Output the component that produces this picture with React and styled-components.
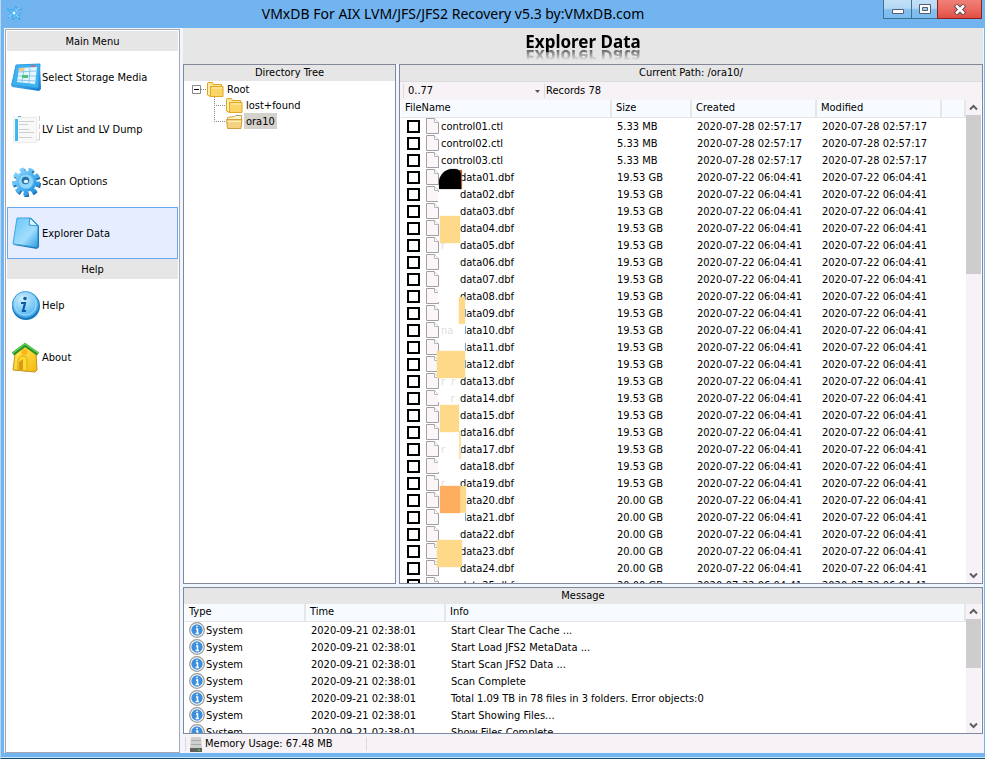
import React, { useState } from 'react';
import styled, { createGlobalStyle } from 'styled-components';


const GlobalStyle = createGlobalStyle`
    * {
        box-sizing: border-box;
    }
    body {
        margin: 0;
        font-family: "DejaVu Sans Condensed", "Noto Sans", sans-serif;
        font-size: 11px;
        line-height: 16px;
        color: #000;
    }
    button, select, input {
        font: inherit;
        color: inherit;
        margin: 0;
    }
    h1, h2, ul {
        margin: 0;
        padding: 0;
        font-size: inherit;
        font-weight: 400;
    }
    svg {
        display: block;
        flex: none;
    }
`

const Window = styled.div`
    display: flex;
    flex-direction: column;
    height: 100vh;
    background: #72b4f0;
    border-left: 1px solid #b5d8f8;
    border-bottom: 1px solid #1f4a6c;
    overflow: hidden;
`

const TitleBar = styled.header`
    display: flex;
    align-items: flex-start;
    flex: none;
    height: 28px;
    padding: 0 3px 0 5px;
`

const TitleIcon = styled.div`
    flex: none;
    padding-top: 5px;
`

const Title = styled.h1`
    flex: 1;
    text-align: center;
    font-family: "Noto Sans", sans-serif;
    font-size: 14px;
    line-height: 28px;
    white-space: nowrap;
`

const WindowButtons = styled.div`
    display: flex;
    justify-content: flex-end;
    width: 99px;
`

const WindowButton = styled.button`
    display: flex;
    align-items: center;
    justify-content: center;
    width: ${p => p.$width}px;
    height: 19px;
    padding: 0;
    border: 1px solid ${p => p.$close ? '#8d1f1c' : '#3f7193'};
    border-top: 0;
    border-right-width: ${p => p.$last ? '1px' : '0'};
    background: ${p => p.$close
        ? 'linear-gradient(#f08078 0%, #ec6a60 50%, #e04e43 100%)'
        : 'linear-gradient(#c2e0f7 0%, #b5d9f5 45%, #84c0ee 55%, #7cbcf0 100%)'};
`

const Body = styled.div`
    display: flex;
    gap: 3px;
    flex: 1;
    min-height: 0;
    margin: 0 1px 0 3px;
    padding: 0 1px 0 1px;
    background: #eef6ff;
`

const Sidebar = styled.nav`
    width: 175px;
    flex: none;
    margin-top: 1px;
    padding: 1px;
    border: 1px solid #a9a7b1;
    background: #fff;
`

const SideHeading = styled.h2`
    height: 20px;
    line-height: 22px;
    text-align: center;
    background: #e6e6e6;
`

const MenuItem = styled.button`
    display: flex;
    align-items: center;
    width: 100%;
    height: 52px;
    padding: 0 3px;
    text-align: left;
    border: 1px solid ${p => p.$active ? '#66a9f2' : 'transparent'};
    background: ${p => p.$active ? '#e6edff' : 'none'};
`

const MenuLabel = styled.span`
    padding-top: 2px;
`

const Main = styled.main`
    display: flex;
    flex-direction: column;
    flex: 1;
    min-width: 0;
`

const Heading = styled.div`
    flex: none;
    height: 36px;
    text-align: center;
    background: #e6e6e6;
`

const HeadingText = styled.span`
    display: inline-block;
    font-family: "Noto Sans", sans-serif;
    font-size: 17px;
    font-weight: 700;
    line-height: 28px;
    -webkit-box-reflect: below -14px linear-gradient(transparent 35%, rgba(0, 0, 0, 0.7) 80%);
`

const Panes = styled.div`
    display: flex;
    gap: 3px;
    flex: 1;
    min-height: 0;
`

const Panel = styled.section`
    display: flex;
    flex-direction: column;
    min-width: 0;
    border: 1px solid #83879a;
    background: #fff;
    overflow: hidden;
`

const TreePanel = styled(Panel)`
    width: 213px;
    flex: none;
`

const FilePanel = styled(Panel)`
    flex: 1;
`

const MessagePanel = styled(Panel)`
    flex: none;
    height: 147px;
    margin-top: 3px;
`

const PanelTitle = styled.h2`
    flex: none;
    height: 16px;
    line-height: 15px;
    text-align: center;
    background: #e6e6e6;
`

const TreeList = styled.ul`
    list-style: none;
    padding: ${p => p.$nested ? '0 0 0 22px' : '0 0 0 8px'};
`

const TreeRow = styled.div`
    display: flex;
    align-items: center;
    height: 16px;
`

const TreeLabel = styled.span`
    height: 16px;
    margin-left: 1px;
    padding: 0 2px;
    line-height: 18px;
    background: ${p => p.$selected ? '#d5d1cc' : 'none'};
`

const Toolbar = styled.div`
    display: flex;
    align-items: center;
    flex: none;
    height: 19px;
    padding-left: 3px;
    border-top: 1px solid #dcdcdc;
    background: #f7f2f6;
`

const RangeBox = styled.label`
    display: flex;
    align-items: center;
    width: 142px;
    height: 14px;
    padding-right: 4px;
    border: 1px solid #dcdadc;
    border-width: 0 1px;
`

const RangeSelect = styled.select`
    flex: 1;
    appearance: none;
    padding: 0 4px;
    border: 0;
    background: none;
`

const Records = styled.span`
    padding-left: 1px;
`

const ListArea = styled.div`
    display: flex;
    flex: 1;
    min-height: 0;
    padding: 0 1px;
`

const ListView = styled.div`
    position: relative;
    flex: 1;
    min-width: 0;
    overflow: hidden;
`

const Table = styled.table`
    width: 100%;
    table-layout: fixed;
    border-collapse: collapse;
    white-space: nowrap;
`

const Col = styled.col`
    width: ${p => p.$width ? p.$width + 'px' : 'auto'};
`

const Th = styled.th`
    height: 17px;
    padding: 0 4px;
    line-height: 16px;
    font-weight: 400;
    text-align: left;
    border-right: 2px solid #e6e6e6;
    border-bottom: 1px solid #e6e6e6;
    background: #f7fbff;
`

const Td = styled.td`
    height: 17px;
    padding: 0 6px;
    line-height: 17px;
`

const FileName = styled.label`
    display: flex;
    align-items: center;
    height: 17px;
`

const Check = styled.input`
    appearance: none;
    width: 13px;
    height: 13px;
    margin-right: 6px !important;
    border: 2px solid #000;
    background: #fff;
`

const FileText = styled.span`
    padding-left: 2px;
`

const Faint = styled.span`
    display: inline-block;
    width: 19px;
    color: #dedede;
    white-space: pre;
`

// brush marks hiding the start of the file names
const Smudge = styled.i`
    position: absolute;
    left: ${p => p.$x}px;
    top: ${p => p.$y}px;
    width: ${p => p.$w}px;
    height: ${p => p.$h}px;
    background: ${p => p.$color};
    border-radius: ${p => p.$blob ? '14px 6px 0 0' : '0'};
    box-shadow: 0 0 1px ${p => p.$color};
    pointer-events: none;
`

const Message = styled.span`
    display: flex;
    align-items: center;
    gap: 1px;
    height: 17px;
    margin-left: -2px;
`

const ScrollBar = styled.div`
    display: flex;
    flex-direction: column;
    width: 15px;
    flex: none;
    background: #f7f2f7;
`

const ScrollButton = styled.button`
    display: flex;
    align-items: center;
    justify-content: center;
    width: 15px;
    height: 15px;
    padding: 0;
    border: 0;
    background: none;
`

const ScrollTrack = styled.div`
    flex: 1;
`

const ScrollThumb = styled.div`
    height: ${p => p.$size}%;
    background: #cdcdcd;
`

const StatusBar = styled.footer`
    display: flex;
    align-items: center;
    flex: none;
    height: 18px;
    margin-top: 1px;
    padding-left: 2px;
    background: #f7f2f6;
`

const StatusCell = styled.div`
    display: flex;
    align-items: center;
    gap: 3px;
    width: 182px;
    height: 14px;
    padding-left: 4px;
    line-height: 18px;
    border: 1px solid #dcd8dc;
    border-width: 0 1px;
`

const BottomEdge = styled.div`
    flex: none;
    height: 5px;
    border-bottom: 1px solid #bfe6fb;
`


const AtomIcon = () => (
    <svg width="17" height="17" viewBox="0 0 17 17" fill="none" stroke="#18a8f0">
        <path d="M1 4l6 1 3-4 2 4 4-1M2 13l4-3-4-5M6 10l1 5 3-3 4 3-1-5 3-3" strokeDasharray="2 1" />
        <path d="M8 8l-5 4M9 7l4-4M8 8l5 5" stroke="#8fe0ff" />
        <circle cx="8" cy="8" r="2" fill="#f2fcff" stroke="#35b4f3" />
    </svg>
)

const MediaIcon = () => (
    <svg width="31" height="29" viewBox="0 0 31 29">
        <defs>
            <linearGradient id="media" x2="1" y2="1">
                <stop stopColor="#6fd0fb" />
                <stop offset="1" stopColor="#1478d0" />
            </linearGradient>
        </defs>
        <path d="M5 2L29 1l1 25-2 2L1 24l-1-2z" fill="url(#media)" />
        <path d="M5 2L29 1l-2 24L1 22z" fill="#3fb2f0" stroke="#2f9fe6" />
        <path d="M8 5l18-1-2 17-18-2z" fill="#e4f6ff" />
        <path d="M7 9l18-1M7 13h18M6 17l18 1M13 5l-2 14M19 5l-1 15" stroke="#8fc6e8" />
        <path d="M8 5h5v3H8z" fill="#f7c97c" />
        <path d="M11 12h6v3h-6z" fill="#4dc471" />
        <path d="M20 3h4" stroke="#e05a4d" strokeWidth="1.500" />
    </svg>
)

const ListIcon = () => (
    <svg width="31" height="30" viewBox="0 0 31 30">
        <path d="M7 2h21v24H7z" fill="#fcfcfc" />
        <path d="M28.500 2v5M28.500 10v5M28.500 18v8h-3" stroke="#cfcfcf" fill="none" />
        <path d="M2.500 3.500h23v25h-23z" fill="#f8f8f9" stroke="#ececec" />
        <path d="M4 5h3v22H4z" fill="#3cb9ec" />
        <path d="M7 2.500h3" stroke="#3cb9ec" />
        <path d="M8 7.500h15M8 10.500h9M8 15.500h10M8 18.500h15M8 23.500h13" stroke="#cfcfd2" />
    </svg>
)

const GearIcon = () => (
    <svg width="31" height="31" viewBox="0 0 31 31">
        <defs>
            <linearGradient id="gear" x2="1" y2="1">
                <stop stopColor="#8fd8ff" />
                <stop offset="1" stopColor="#1b8fe0" />
            </linearGradient>
        </defs>
        <circle cx="16" cy="17" r="11.500" fill="none" stroke="#1c6fae" strokeWidth="5" strokeDasharray="4.300 3.728" />
        <circle cx="15" cy="15.500" r="11.500" fill="none" stroke="url(#gear)" strokeWidth="5" strokeDasharray="4.300 3.728" />
        <circle cx="15" cy="15.500" r="10.500" fill="url(#gear)" />
        <circle cx="15" cy="15.500" r="7.500" fill="#8fd6fb" stroke="#5cb8ee" />
        <circle cx="14.500" cy="14.500" r="3.800" fill="#2a6fa8" />
        <ellipse cx="15" cy="15.500" rx="2.300" ry="1.800" fill="#e3f5ff" />
    </svg>
)

const PageIcon = () => (
    <svg width="31" height="33" viewBox="0 0 31 33">
        <defs>
            <linearGradient id="page" x2="1" y2="1">
                <stop stopColor="#62c5f7" />
                <stop offset="0.600" stopColor="#a3defc" />
                <stop offset="1" stopColor="#2f9de4" />
            </linearGradient>
        </defs>
        <path d="M7 2l14 0 7 7 0 21-2 2-23-4z" fill="#1c78b8" />
        <path d="M6 1h14l7 7-1 22-24-3z" fill="url(#page)" stroke="#3fa4e2" />
        <path d="M19 1l-1 7 9 1z" fill="#dff4ff" stroke="#2f94d6" />
    </svg>
)

const HelpIcon = () => (
    <svg width="31" height="31" viewBox="0 0 31 31">
        <defs>
            <radialGradient id="help" cx="0.400" cy="0.300" r="0.800">
                <stop stopColor="#d5f2ff" />
                <stop offset="1" stopColor="#35a9ee" />
            </radialGradient>
        </defs>
        <circle cx="15" cy="16" r="14" fill="#1878be" />
        <circle cx="14.500" cy="14.500" r="13" fill="url(#help)" stroke="#3b9cd8" />
        <circle cx="14.500" cy="14.500" r="10.500" fill="none" stroke="#a7dcf8" />
        <circle cx="14" cy="8.500" r="1.800" fill="#0c5ea8" />
        <path d="M10 13h4l-2 8h3" stroke="#0c5ea8" strokeWidth="2.200" fill="none" />
    </svg>
)

const HouseIcon = () => (
    <svg width="31" height="31" viewBox="0 0 31 31">
        <defs>
            <linearGradient id="house" x2="1" y2="1">
                <stop stopColor="#fff05a" />
                <stop offset="1" stopColor="#f3b80e" />
            </linearGradient>
        </defs>
        <path d="M4 12L14 4l11 8 1 16-2 2L2 28z" fill="url(#house)" stroke="#c9901a" />
        <circle cx="13.500" cy="10" r="3" fill="#ffb31d" />
        <path d="M7 28V19q1-5 5-5t4 5v10z" fill="#ffdc2c" stroke="#dba31a" />
        <path d="M8 28V20l4-3v11z" fill="#d89a18" />
        <path d="M2 12L14 3l13 9" fill="none" stroke="#2b8f28" strokeWidth="3.500" />
        <path d="M2 11L14 2l13 9" fill="none" stroke="#5cd652" strokeWidth="1.500" />
    </svg>
)

const FolderIcon = ({ open }) => (
    <svg width="17" height="15" viewBox="0 0 17 15">
        {open ? (
            <>
                <path d="M1.500 3.500l7-1 1-1h6v5h-14z" fill="#fff3cc" stroke="#d3a23c" />
                <path d="M11 1.500h2" stroke="#4aa3e0" />
                <path d="M.5 5.500h15.500l-1 9H1.500z" fill="#f5d182" stroke="#cf9f3c" />
                <path d="M2 7.500h13" stroke="#fff0b8" />
            </>
        ) : (
            <>
                <path d="M.5 1.500q0-1 1-1h4l1 2h8v3h-14z" fill="#fbe595" stroke="#dba520" />
                <path d="M.5 2v11l3 1.500V4" fill="#fff0b0" stroke="#dba520" />
                <path d="M3.500 4.500h12.500v10h-12.500z" fill="#fbd568" stroke="#e0a924" />
                <path d="M5 6h10" stroke="#fff0b8" />
            </>
        )}
    </svg>
)

const Dots = ({ width, last, stem }) => (
    <svg width={width} height="16" viewBox={`0 0 ${width} 16`} stroke="#888" strokeDasharray="1 1">
        <path d={`M0 8.500H${width}`} />
        {stem && <path d={last ? 'M.5 0V8' : 'M.5 0V16'} />}
    </svg>
)

const FileIcon = () => (
    <svg width="13" height="16" viewBox="0 0 13 16">
        <path d="M.5.5h8l4 4v11H.5z" fill="#faf6f9" stroke="#a19fa2" />
        <path d="M8.500.5v4h4" fill="#fff" stroke="#b8b6b9" />
    </svg>
)

const InfoIcon = () => (
    <svg width="16" height="16" viewBox="0 0 16 16">
        <circle cx="8" cy="8" r="7.300" fill="#fff" stroke="#989898" strokeWidth="1.200" />
        <circle cx="8" cy="8" r="5.700" fill="#3c8fdc" />
        <path d="M7 7h1.500v4.500M6.500 11.500h3.500M7.200 4.500h1.600" stroke="#fff" strokeWidth="1.500" fill="none" />
    </svg>
)

const DriveIcon = () => (
    <svg width="12" height="15" viewBox="0 0 12 15">
        <path d="M1 0h10l1 12H0z" fill="#cfcfcf" />
        <path d="M1 3.500h10M1 7.500h10" stroke="#a8a8a8" />
        <path d="M0 11h12v4H0z" fill="#606060" />
        <path d="M8 13h2" stroke="#43d03c" strokeWidth="1.500" />
    </svg>
)

const Chevron = ({ down }) => (
    <svg width="9" height="7" viewBox="0 0 9 7" fill="none" stroke="#606060" strokeWidth="2">
        <path d={down ? 'M1 1.500l3.500 3.500 3.500-3.500' : 'M1 5.500l3.500-3.500 3.500 3.500'} />
    </svg>
)


const mainMenu = [
    { label: 'Select Storage Media', Icon: MediaIcon },
    { label: 'LV List and LV Dump', Icon: ListIcon },
    { label: 'Scan Options', Icon: GearIcon },
    { label: 'Explorer Data', Icon: PageIcon },
]

const helpMenu = [
    { label: 'Help', Icon: HelpIcon },
    { label: 'About', Icon: HouseIcon },
]

const faint = { 5: 'r', 10: 'na', 13: 'r  r', 14: '   r', 17: 'r', 19: 'r' }

const files = [
    ...[1, 2, 3].map(n => ({
        name: `control0${n}.ctl`,
        size: '5.33 MB',
        date: '2020-07-28 02:57:17',
    })),
    ...Array.from({ length: 25 }, (_, i) => i + 1).map(n => ({
        name: `data${String(n).padStart(2, '0')}.dbf`,
        hidden: true,
        prefix: faint[n],
        size: n < 20 ? '19.53 GB' : '20.00 GB',
        date: '2020-07-22 06:04:41',
    })),
]

const smudges = [
    { x: 58, y: 70, w: 3, h: 19, color: '#c4622c' },
    { x: 38, y: 69, w: 22, h: 20, color: '#000', blob: true },
    { x: 37, y: 92, w: 4, h: 14, color: '#fff' },
    { x: 39, y: 116, w: 20, h: 27, color: '#fed98a' },
    { x: 37, y: 190, w: 4, h: 12, color: '#fff' },
    { x: 58, y: 197, w: 6, h: 27, color: '#fed98a' },
    { x: 59, y: 224, w: 5, h: 27, color: '#fff' },
    { x: 36, y: 251, w: 28, h: 27, color: '#fed98a' },
    { x: 37, y: 290, w: 3, h: 12, color: '#fff' },
    { x: 39, y: 305, w: 19, h: 27, color: '#fed98a' },
    { x: 58, y: 332, w: 2, h: 27, color: '#fee3a8' },
    { x: 37, y: 358, w: 3, h: 14, color: '#fff' },
    { x: 58, y: 386, w: 7, h: 27, color: '#fed98a' },
    { x: 39, y: 386, w: 20, h: 27, color: '#ffad5f' },
    { x: 59, y: 413, w: 5, h: 14, color: '#fff' },
    { x: 36, y: 440, w: 25, h: 27, color: '#fed98a' },
]

const messages = [
    'Start Clear The Cache ...',
    'Start Load JFS2 MetaData ...',
    'Start Scan JFS2 Data ...',
    'Scan Complete',
    'Total 1.09 TB  in 78 files in 3 folders. Error objects:0',
    'Start Showing Files...',
    'Show Files Complete',
]

const Scroller = ({ size }) => (
    <ScrollBar>
        <ScrollButton aria-label="Scroll up"><Chevron /></ScrollButton>
        <ScrollTrack>
            <ScrollThumb $size={size} />
        </ScrollTrack>
        <ScrollButton aria-label="Scroll down"><Chevron down /></ScrollButton>
    </ScrollBar>
)

const Menu = ({ items, active, onSelect }) => items.map(({ label, Icon }) => (
    <MenuItem key={label} $active={label === active} onClick={() => onSelect(label)}>
        <Icon />
        <MenuLabel>{label}</MenuLabel>
    </MenuItem>
))

export default function App() {

    const [active, setActive] = useState('Explorer Data')

    return (
        <Window>
            <GlobalStyle />
            <TitleBar>
                <TitleIcon><AtomIcon /></TitleIcon>
                <Title>VMxDB For AIX LVM/JFS/JFS2 Recovery v5.3 by:VMxDB.com</Title>
                <WindowButtons>
                    <WindowButton $width={28} aria-label="Minimize">
                        <svg width="12" height="11" viewBox="0 0 12 11">
                            <path d="M.5 5.500h11v4H.5z" fill="#fff" stroke="#555e70" />
                        </svg>
                    </WindowButton>
                    <WindowButton $width={26} aria-label="Maximize">
                        <svg width="12" height="11" viewBox="0 0 12 11">
                            <path d="M.5.5h11v9H.5z" fill="#fff" stroke="#555e70" />
                            <path d="M3.500 3.500h5v3h-5z" fill="#9fcdf1" stroke="#555e70" />
                        </svg>
                    </WindowButton>
                    <WindowButton $width={45} $close $last aria-label="Close">
                        <svg width="12" height="11" viewBox="0 0 12 11">
                            <path d="M1.500 1l9 9M10.500 1l-9 9" stroke="#5c4550" strokeWidth="4.500" />
                            <path d="M2 1.500l8 8M10 1.500l-8 8" stroke="#fff" strokeWidth="2.600" />
                        </svg>
                    </WindowButton>
                </WindowButtons>
            </TitleBar>

            <Body>
                <Sidebar>
                    <SideHeading>Main Menu</SideHeading>
                    <Menu items={mainMenu} active={active} onSelect={setActive} />
                    <SideHeading>Help</SideHeading>
                    <Menu items={helpMenu} active={active} onSelect={setActive} />
                </Sidebar>

                <Main>
                    <Heading><HeadingText>Explorer Data</HeadingText></Heading>
                    <Panes>
                        <TreePanel>
                            <PanelTitle>Directory Tree</PanelTitle>
                            <TreeList>
                                <li>
                                    <TreeRow>
                                        <svg width="9" height="9" viewBox="0 0 9 9">
                                            <path d="M.5.5h8v8h-8z" fill="#fff" stroke="#888" />
                                            <path d="M2 4.500h5" stroke="#000" />
                                        </svg>
                                        <Dots width={6} />
                                        <FolderIcon />
                                        <TreeLabel>Root</TreeLabel>
                                    </TreeRow>
                                    <TreeList $nested>
                                        <li>
                                            <TreeRow>
                                                <Dots width={12} stem />
                                                <FolderIcon />
                                                <TreeLabel>lost+found</TreeLabel>
                                            </TreeRow>
                                        </li>
                                        <li>
                                            <TreeRow>
                                                <Dots width={12} stem last />
                                                <FolderIcon open />
                                                <TreeLabel $selected>ora10</TreeLabel>
                                            </TreeRow>
                                        </li>
                                    </TreeList>
                                </li>
                            </TreeList>
                        </TreePanel>

                        <FilePanel>
                            <PanelTitle>Current Path: /ora10/</PanelTitle>
                            <Toolbar>
                                <RangeBox>
                                    <RangeSelect aria-label="Record range">
                                        <option>0..77</option>
                                    </RangeSelect>
                                    <svg width="5" height="3" viewBox="0 0 5 3"><path d="M0 0h5L2.500 3z" fill="#555" /></svg>
                                </RangeBox>
                                <Records>Records 78</Records>
                            </Toolbar>
                            <ListArea>
                                <ListView>
                                    <Table>
                                        <colgroup>
                                            <Col $width={210} />
                                            <Col $width={80} />
                                            <Col $width={125} />
                                            <Col $width={125} />
                                            <Col />
                                        </colgroup>
                                        <thead>
                                            <tr>
                                                <Th>FileName</Th>
                                                <Th>Size</Th>
                                                <Th>Created</Th>
                                                <Th>Modified</Th>
                                                <Th />
                                            </tr>
                                        </thead>
                                        <tbody>
                                            {files.map(f => (
                                                <tr key={f.name}>
                                                    <Td>
                                                        <FileName>
                                                            <Check type="checkbox" />
                                                            <FileIcon />
                                                            <FileText>
                                                                {f.hidden && <Faint>{f.prefix}</Faint>}
                                                                {f.name}
                                                            </FileText>
                                                        </FileName>
                                                    </Td>
                                                    <Td>{f.size}</Td>
                                                    <Td>{f.date}</Td>
                                                    <Td>{f.date}</Td>
                                                    <Td />
                                                </tr>
                                            ))}
                                        </tbody>
                                    </Table>
                                    {smudges.map((s, i) => (
                                        <Smudge key={i} $x={s.x} $y={s.y} $w={s.w} $h={s.h} $color={s.color} $blob={s.blob} />
                                    ))}
                                </ListView>
                                <Scroller size={35} />
                            </ListArea>
                        </FilePanel>
                    </Panes>

                    <MessagePanel>
                        <PanelTitle>Message</PanelTitle>
                        <ListArea>
                            <ListView>
                                <Table>
                                    <colgroup>
                                        <Col $width={120} />
                                        <Col $width={140} />
                                        <Col />
                                    </colgroup>
                                    <thead>
                                        <tr>
                                            <Th>Type</Th>
                                            <Th>Time</Th>
                                            <Th>Info</Th>
                                        </tr>
                                    </thead>
                                    <tbody>
                                        {messages.map(text => (
                                            <tr key={text}>
                                                <Td><Message><InfoIcon />System</Message></Td>
                                                <Td>2020-09-21 02:38:01</Td>
                                                <Td>{text}</Td>
                                            </tr>
                                        ))}
                                    </tbody>
                                </Table>
                            </ListView>
                            <Scroller size={49} />
                        </ListArea>
                    </MessagePanel>

                    <StatusBar>
                        <StatusCell>
                            <DriveIcon />
                            Memory Usage: 67.48 MB
                        </StatusCell>
                    </StatusBar>
                </Main>
            </Body>
            <BottomEdge />
        </Window>
    )
}
